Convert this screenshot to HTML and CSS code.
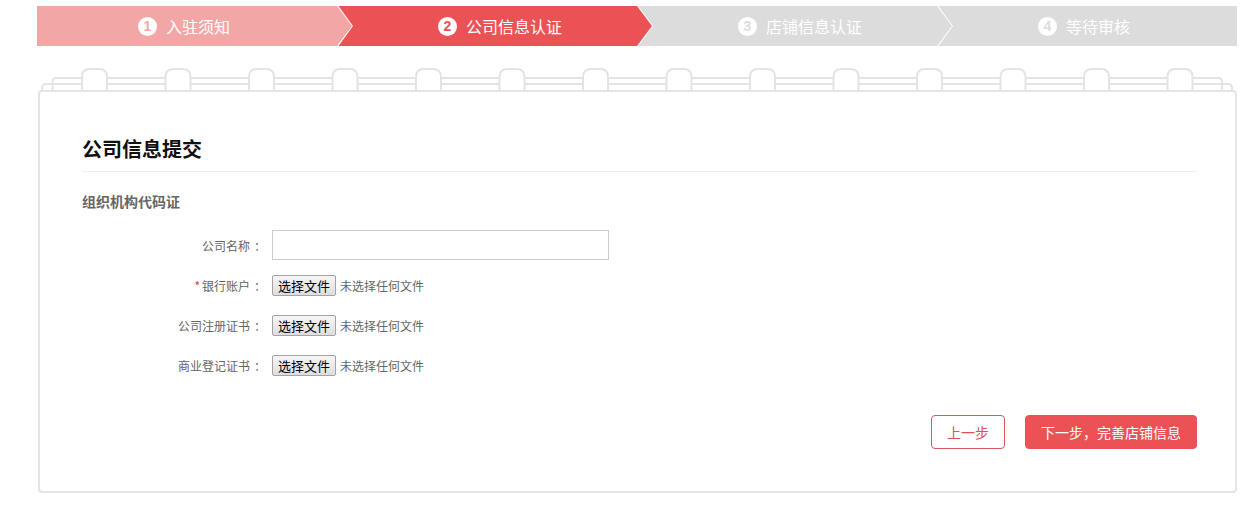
FILE: index.html
```html
<!DOCTYPE html>
<html lang="zh-CN">
<head>
<meta charset="utf-8">
<title>公司信息认证</title>
<link rel="stylesheet" href="styles.css">
</head>
<body>
<div class="steps">
  <div class="step step-done"><span class="num">1</span>入驻须知</div>
  <div class="step step-active"><span class="num">2</span>公司信息认证</div>
  <div class="step step-todo"><span class="num">3</span>店铺信息认证</div>
  <div class="step step-todo step-last"><span class="num">4</span>等待审核</div>
</div>

<div class="paper">
  <svg class="binder" width="1200" height="24" viewBox="0 0 1200 24" xmlns="http://www.w3.org/2000/svg">
    <g fill="none" stroke="#e4e4e4" stroke-width="2">
      <path d="M15.5 24 V16 Q15.5 12 19.5 12 H1181 Q1185 12 1185 16 V24"/>
      <path d="M5 24 V22 Q5 18 9 18 H1191 Q1195 18 1195 22 V24"/>
    </g>
    <g fill="#fff" stroke="#e4e4e4" stroke-width="2" id="rings"></g>
  </svg>
  <div class="card">
    <h2 class="card-title">公司信息提交</h2>
    <h3 class="section-title">组织机构代码证</h3>
    <div class="form">
      <label class="form-label">公司名称<span class="colon">：</span></label>
      <div class="form-field"><input class="text-input" type="text"></div>

      <label class="form-label"><span class="req">*</span> 银行账户<span class="colon">：</span></label>
      <div class="form-field"><span class="file-btn">选择文件</span><span class="file-note">未选择任何文件</span></div>

      <label class="form-label">公司注册证书<span class="colon">：</span></label>
      <div class="form-field"><span class="file-btn">选择文件</span><span class="file-note">未选择任何文件</span></div>

      <label class="form-label">商业登记证书<span class="colon">：</span></label>
      <div class="form-field"><span class="file-btn">选择文件</span><span class="file-note">未选择任何文件</span></div>
    </div>
    <div class="actions">
      <button class="btn btn-ghost">上一步</button>
      <button class="btn btn-primary">下一步，完善店铺信息</button>
    </div>
  </div>
</div>
<script>
  (function () {
    var g = document.getElementById('rings');
    var html = '';
    for (var i = 0; i < 14; i++) {
      var x = 45 + i * 83.5;
      html += '<path d="M' + x + ' 24 V11 Q' + x + ' 3 ' + (x + 8) + ' 3 H' + (x + 17) +
        ' Q' + (x + 25) + ' 3 ' + (x + 25) + ' 11 V24"/>';
    }
    g.innerHTML = html;
  })();
</script>
</body>
</html>
```

FILE: styles.css
```css
* { box-sizing: border-box; }

body {
  margin: 0;
  background: #fff;
  font-family: "Noto Sans CJK SC", "Liberation Sans", sans-serif;
  color: #333;
}

/* ---------- steps ---------- */
.steps {
  display: flex;
  width: 1200px;
  height: 40px;
  margin: 6px 0 0 37px;
  overflow: hidden;
}

.step {
  position: relative;
  flex: 0 0 300px;
  display: flex;
  align-items: center;
  padding-left: 101px;
  height: 40px;
  font-size: 16px;
  line-height: 40px;
  color: #fff;
}

.step-done   { background: #f3a6a6; z-index: 4; --c: #f3a6a6; }
.step-active { background: #eb5256; z-index: 3; --c: #eb5256; }
.step-todo   { background: #dcdcdc; z-index: 2; --c: #dcdcdc; }
.step-last   { z-index: 1; }

.step::before,
.step::after {
  content: "";
  position: absolute;
  left: 300px;
  width: 0;
  height: 0;
  border-style: solid;
}

.step::before {
  top: -2px;
  border-width: 22px 0 22px 16.5px;
  border-color: transparent transparent transparent #fff;
}

.step::after {
  top: 0;
  border-width: 20px 0 20px 15px;
  border-color: transparent transparent transparent var(--c);
}

.step-last::before,
.step-last::after { display: none; }

.num {
  display: inline-flex;
  align-items: center;
  justify-content: center;
  width: 19px;
  height: 19px;
  margin-right: 9px;
  border-radius: 50%;
  background: #fff;
  color: var(--c);
  font-family: "Liberation Sans", sans-serif;
  font-weight: bold;
  font-size: 14px;
  line-height: 19px;
}

/* ---------- paper ---------- */
.paper {
  width: 1200px;
  margin: 20px 0 0 37px;
}

.binder {
  display: block;
}

.card {
  width: 1199px;
  margin-left: 1px;
  border: 2px solid #e5e5e5;
  border-radius: 4px;
  padding: 42px 38px 42px 42px;
}

.card-title {
  margin: 0;
  font-size: 20px;
  line-height: 30px;
  font-weight: bold;
  color: #111;
  padding-bottom: 7px;
  border-bottom: 1px solid #eeeeee;
}

.section-title {
  margin: 19px 0 0;
  font-size: 14px;
  line-height: 20px;
  font-weight: bold;
  color: #666;
}

/* ---------- form ---------- */
.form {
  display: grid;
  grid-template-columns: 180px 1fr;
  grid-auto-rows: 30px;
  column-gap: 10px;
  row-gap: 10px;
  margin-top: 19px;
}

.form-label {
  display: flex;
  align-items: center;
  justify-content: flex-end;
  font-size: 12px;
  color: #666;
}

.colon {
  display: inline-block;
  width: 12px;
  text-indent: 4px;
  white-space: nowrap;
}

.req {
  color: #e4393c;
  margin-right: 2px;
}

.form-field {
  display: flex;
  align-items: center;
}

.text-input {
  width: 337px;
  height: 30px;
  margin: 0;
  border: 1px solid #cccccc;
  padding: 0 6px;
  font: inherit;
  outline: none;
}

.file-btn {
  display: inline-flex;
  align-items: center;
  height: 21px;
  padding: 0 5px;
  border: 1px solid #a3a3a3;
  border-radius: 2px;
  background: linear-gradient(#f6f6f6, #dedede);
  color: #000;
  font-size: 13px;
  line-height: 19px;
}

.file-note {
  margin-left: 4px;
  font-size: 12px;
  color: #666;
}

/* ---------- actions ---------- */
.actions {
  display: flex;
  justify-content: flex-end;
  gap: 20px;
  margin-top: 35px;
}

.btn {
  height: 34px;
  border-radius: 4px;
  font-family: inherit;
  font-size: 14px;
  line-height: 32px;
  padding: 0;
  cursor: pointer;
}

.btn-ghost {
  width: 74px;
  background: #fff;
  border: 1px solid #e0575b;
  color: #e05054;
}

.btn-primary {
  width: 172px;
  background: #eb5256;
  border: 1px solid #eb5256;
  color: #fff;
}
```
